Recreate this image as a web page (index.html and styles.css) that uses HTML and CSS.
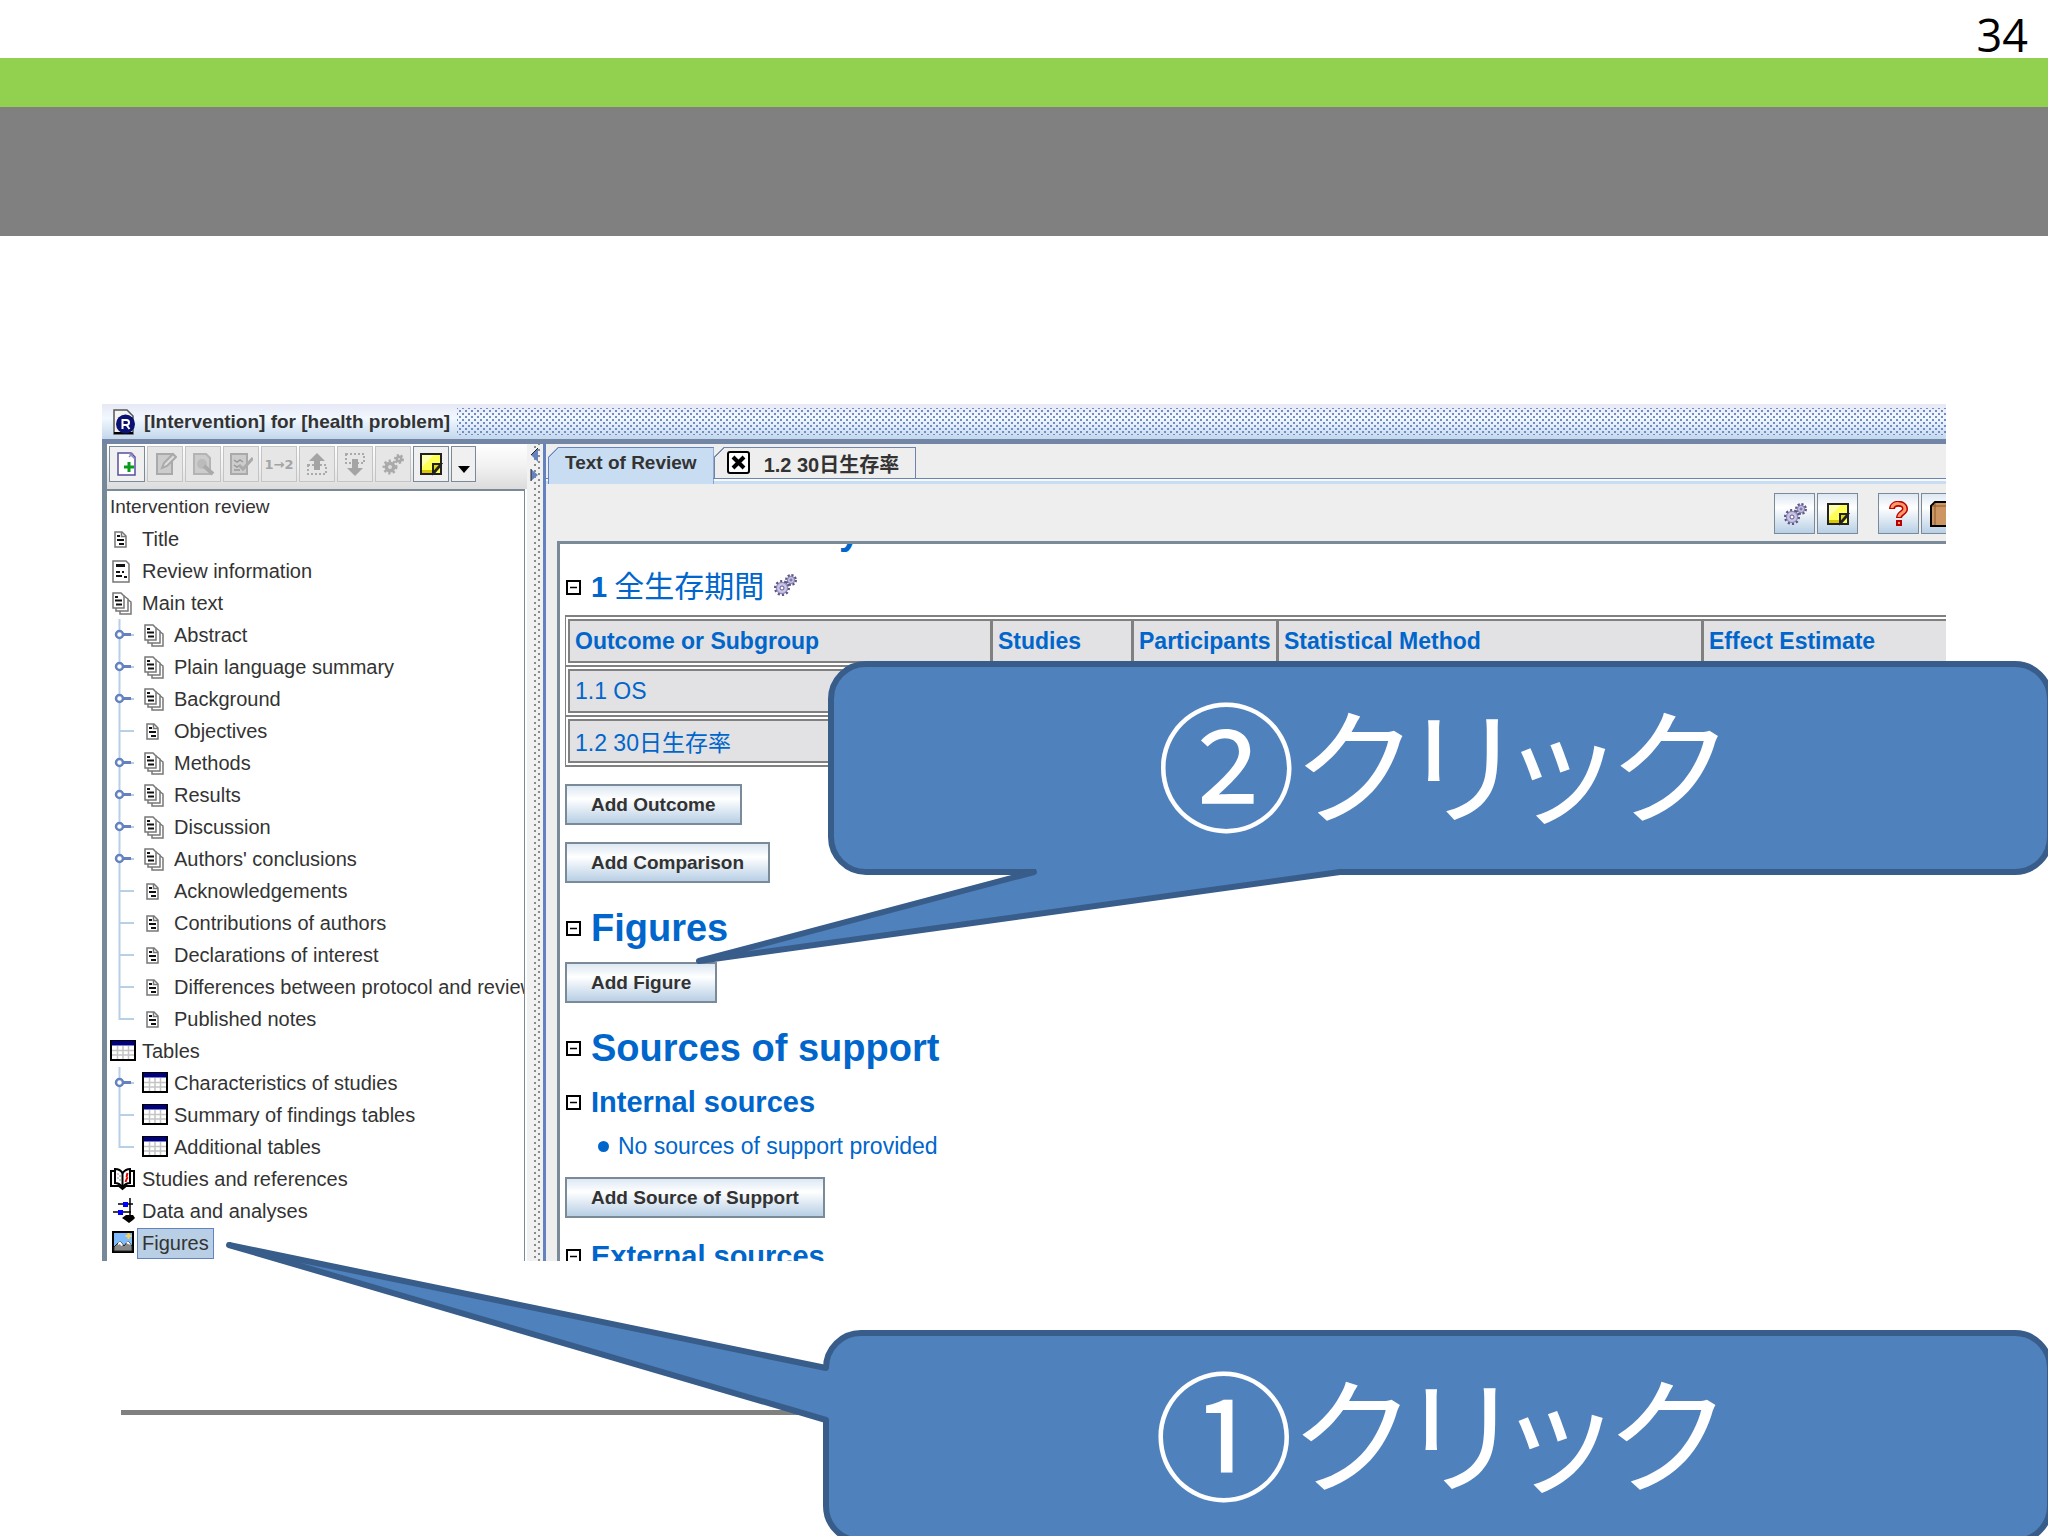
FILE: index.html
```
<!DOCTYPE html>
<html lang="ja">
<head>
    <meta charset="UTF-8">
    <meta name="viewport" content="width=device-width, initial-scale=1.0">
    <title>[Intervention] for [health problem]</title>
    <link rel="stylesheet" href="styles.css">
</head>
<body>
    <!-- Shared icons -->
    <svg class="sprite" aria-hidden="true">
        <symbol id="i-doc" viewBox="0 0 26 32">
            <path d="M5 9h7l4 4v11H5z" fill="#fff" stroke="#777" stroke-width="1.5"/>
            <path d="M11.500 9v4.500H16" fill="none" stroke="#777" stroke-width="1.500"/>
            <path d="M7 13h3M7 17h7M9 21h5" stroke="#111" stroke-width="2"/>
        </symbol>
        <symbol id="i-info" viewBox="0 0 26 32">
            <path d="M3 6h13l3 3v18H3z" fill="#fff" stroke="#777" stroke-width="1.5"/>
            <path d="M6 9h9v3H6z" fill="#111"/>
            <path d="M6 17h4m2 0h2M6 21h6m2 1h3" stroke="#111" stroke-width="2"/>
        </symbol>
        <symbol id="i-docs" viewBox="0 0 26 32">
            <path d="M10 12h7l4 3v12H10z" fill="#fff" stroke="#777" stroke-width="1.5"/>
            <path d="M6 9h8l4 3v12H6z" fill="#fff" stroke="#777" stroke-width="1.5"/>
            <path d="M3 6h8l3 3v12H3z" fill="#fff" stroke="#777" stroke-width="1.5"/>
            <path d="M5 10h3M5 13.500h7M6 17.500h6" stroke="#111" stroke-width="2"/>
        </symbol>
        <symbol id="i-table" viewBox="0 0 26 32">
            <path d="M1 6h24v19H1z" fill="#fff" stroke="#000" stroke-width="2"/>
            <path d="M1.500 6h23v4.500h-23z" fill="#000080"/>
            <path d="M7.500 11v13M13 11v13M18.500 11v13M2 15.500h22M2 20h22" stroke="#c4c4c4" stroke-width="1.500"/>
        </symbol>
        <symbol id="i-book" viewBox="0 0 26 32">
            <path d="M5 8H1v15h8l3.500 3 3.500-3h8V8h-4" fill="#fff" stroke="#000" stroke-width="2"/>
            <path d="M12.500 10C10 6 7 6 5 6v14c3 0 5 1 7.500 4 2.500-3 4.500-4 7.500-4V6c-3 0-5 1-7.500 4z" fill="#fff" stroke="#000" stroke-width="2"/>
            <path d="M12.500 10v14" stroke="#000" stroke-width="2"/>
            <path d="M8 10v8M10 12v8" stroke="#999" stroke-dasharray="2 2"/>
            <path d="M17.500 10l-1 4m1 0l-2 5" fill="none" stroke="#e00" stroke-width="2"/>
        </symbol>
        <symbol id="i-data" viewBox="0 0 26 32">
            <path d="M20 3v20M8 9h15M3 17h18" stroke="#000" stroke-width="1.5"/>
            <path d="M13 7h5v5h-5zM8 15h5v5H8z" fill="#00f"/>
            <path d="M12 23l4-3h7l2 3-2 2-4 3-4-3z" fill="#000"/>
        </symbol>
        <symbol id="i-figure" viewBox="0 0 26 32">
            <path d="M3 5h20v20H3z" fill="#7fbcff" stroke="#000" stroke-width="2"/>
            <path d="M4 20l6-6 4 5 4-5 4 5v5H4z" fill="#888" stroke="#222"/>
            <path d="M8 16l2-2 3 4-2 1-1-2-2 1zM16 16l2-2 3 4-3-1z" fill="#fff"/>
            <path d="M18.500 6v6M15.500 9h6" stroke="#ffd34d" stroke-width="2"/>
        </symbol>
        <symbol id="g-knob" viewBox="0 0 32 32">
            <path d="M9.500 0v32M9.500 16H24" stroke="#b8cfe5" stroke-width="2"/>
            <path d="M13 15.500h8" stroke="#6382bf" stroke-width="3"/>
            <circle cx="9.500" cy="15.500" r="3.500" fill="#fff" stroke="#6382bf" stroke-width="2.500"/>
        </symbol>
        <symbol id="g-line" viewBox="0 0 32 32">
            <path d="M9.500 0v32M9.500 16H24" fill="none" stroke="#b8cfe5" stroke-width="2"/>
        </symbol>
        <symbol id="g-last" viewBox="0 0 32 32">
            <path d="M9.500 0v16H24" fill="none" stroke="#b8cfe5" stroke-width="2"/>
        </symbol>
        <symbol id="i-gears" viewBox="0 0 24 24">
            <g fill="#c9c4e8" stroke="#5b5784">
                <circle cx="9" cy="15" r="6.500" stroke-width="3" stroke-dasharray="2 2"/>
                <circle cx="9" cy="15" r="5.500" stroke="#8884ae"/>
                <circle cx="18" cy="7" r="4.500" stroke-width="3" stroke-dasharray="2 1.500"/>
                <circle cx="18" cy="7" r="3.500" stroke="#8884ae"/>
            </g>
            <circle cx="9" cy="15" r="2" fill="#fff" stroke="#5b5784"/>
            <circle cx="18" cy="7" r="1" fill="#fff" stroke="#5b5784"/>
        </symbol>
        <symbol id="i-gears-off" viewBox="0 0 24 24">
            <g fill="#aaa" stroke="#aaa">
                <circle cx="9" cy="15" r="5.500" stroke-width="4" stroke-dasharray="2 2"/>
                <circle cx="18" cy="7" r="3.500" stroke-width="3" stroke-dasharray="2 1.500"/>
            </g>
            <circle cx="9" cy="15" r="2" fill="#ddd"/>
            <circle cx="18" cy="7" r="1" fill="#ddd"/>
        </symbol>
        <symbol id="i-note" viewBox="0 0 24 24">
            <path d="M2 2h20v20H2z" fill="#ff5" stroke="#222" stroke-width="2"/>
            <path d="M3 3h12L3 15z" fill="#ffffb0"/>
            <path d="M3 18h10v3H3z" fill="#dcc800"/>
            <path d="M14 21v-9h8zM15 21l7-8" fill="#e8d800" stroke="#222" stroke-width="2"/>
        </symbol>
        <symbol id="i-minus" viewBox="0 0 15 15">
            <path d="M1 1h13v13H1z" fill="#fff" stroke="#000" stroke-width="2"/>
            <path d="M4 7.500h7" stroke="#000" stroke-width="1.500"/>
        </symbol>
    </svg>

    <div class="slide">
        <div class="page-number">34</div>
        <div class="band band-green"></div>
        <div class="band band-gray"></div>

        <div class="app">
            <div class="titlebar">
                <svg class="logo" viewBox="0 0 22 26">
                    <path d="M1 1h13l6 6v18H1z" fill="#f4f4f4" stroke="#555" stroke-width="1.500"/>
                    <path d="M1 24h19" stroke="#000" stroke-width="2"/>
                    <circle cx="12.500" cy="15" r="9.500" fill="#0a1172"/>
                    <path d="M9.500 20v-9h4a2.500 2.500 0 0 1 0 5h-4m4 0l3 4" fill="none" stroke="#fff" stroke-width="2"/>
                </svg>
                <span>[Intervention] for [health problem]</span>
                <div class="grip"></div>
            </div>

            <div class="body">
                <div class="side">
                    <div class="toolbar">
                        <button class="tool" aria-label="New"><svg viewBox="0 0 24 24"><path d="M3 1h13l4 4v18H3z" fill="#fff" stroke="#554fa0" stroke-width="1.500"/><path d="M14 1l6 6M14 5l4-4" stroke="#8f8ac0" stroke-width="1.500"/><path d="M14 10v10M9 15h10" stroke="#0a9a20" stroke-width="3"/></svg></button>
                        <button class="tool" aria-label="Edit" disabled><svg viewBox="0 0 24 24"><path d="M4 2h15v20H4z" fill="#ccc" stroke="#aaa" stroke-width="2"/><path d="M9 16l2-5 9-9 3 3-9 9z" fill="#ddd" stroke="#aaa" stroke-width="2"/></svg></button>
                        <button class="tool" aria-label="View" disabled><svg viewBox="0 0 24 24"><path d="M3 2h12l4 4v16H3z" fill="#ccc" stroke="#b4b4b4" stroke-width="2"/><circle cx="11" cy="12" r="5" fill="#bbb"/><path d="M13 14l9 8" stroke="#aaa" stroke-width="4"/></svg></button>
                        <button class="tool" aria-label="Check" disabled><svg viewBox="0 0 24 24"><path d="M2 2h16v20H2z" fill="#ccc" stroke="#aaa" stroke-width="2"/><path d="M5 8l3 2 3-2 3 2M5 13l3 2 3-2M5 18h6" fill="none" stroke="#999" stroke-width="1.500"/><path d="M10 13l4 4 10-11" fill="none" stroke="#aaa" stroke-width="3"/></svg></button>
                        <button class="tool tool-text" disabled>1→2</button>
                        <button class="tool" aria-label="Move up" disabled><svg viewBox="0 0 24 24"><path d="M3 13h18v9H3z" fill="none" stroke="#aaa" stroke-width="2" stroke-dasharray="2 2"/><path d="M12 1l8 8h-5v9H9V9H4z" fill="#a4a4a4"/></svg></button>
                        <button class="tool" aria-label="Move down" disabled><svg viewBox="0 0 24 24"><path d="M3 2h18v9H3z" fill="none" stroke="#aaa" stroke-width="2" stroke-dasharray="2 2"/><path d="M12 24l8-8h-5V7H9v9H4z" fill="#a4a4a4"/></svg></button>
                        <button class="tool" aria-label="Properties" disabled><svg><use href="#i-gears-off"/></svg></button>
                        <button class="tool" aria-label="Note"><svg><use href="#i-note"/></svg></button>
                        <button class="tool tool-drop" aria-label="More"><svg viewBox="0 0 12 24"><path d="M0 14h12l-6 7z" fill="#000"/></svg></button>
                    </div>
                    <ul class="tree">
                        <li class="root">Intervention review</li>
                        <li><svg class="icon"><use href="#i-doc"/></svg><span>Title</span></li>
                        <li><svg class="icon"><use href="#i-info"/></svg><span>Review information</span></li>
                        <li><svg class="icon"><use href="#i-docs"/></svg><span>Main text</span></li>
                        <li><svg class="guide"><use href="#g-knob"/></svg><svg class="icon"><use href="#i-docs"/></svg><span>Abstract</span></li>
                        <li><svg class="guide"><use href="#g-knob"/></svg><svg class="icon"><use href="#i-docs"/></svg><span>Plain language summary</span></li>
                        <li><svg class="guide"><use href="#g-knob"/></svg><svg class="icon"><use href="#i-docs"/></svg><span>Background</span></li>
                        <li><svg class="guide"><use href="#g-line"/></svg><svg class="icon"><use href="#i-doc"/></svg><span>Objectives</span></li>
                        <li><svg class="guide"><use href="#g-knob"/></svg><svg class="icon"><use href="#i-docs"/></svg><span>Methods</span></li>
                        <li><svg class="guide"><use href="#g-knob"/></svg><svg class="icon"><use href="#i-docs"/></svg><span>Results</span></li>
                        <li><svg class="guide"><use href="#g-knob"/></svg><svg class="icon"><use href="#i-docs"/></svg><span>Discussion</span></li>
                        <li><svg class="guide"><use href="#g-knob"/></svg><svg class="icon"><use href="#i-docs"/></svg><span>Authors' conclusions</span></li>
                        <li><svg class="guide"><use href="#g-line"/></svg><svg class="icon"><use href="#i-doc"/></svg><span>Acknowledgements</span></li>
                        <li><svg class="guide"><use href="#g-line"/></svg><svg class="icon"><use href="#i-doc"/></svg><span>Contributions of authors</span></li>
                        <li><svg class="guide"><use href="#g-line"/></svg><svg class="icon"><use href="#i-doc"/></svg><span>Declarations of interest</span></li>
                        <li><svg class="guide"><use href="#g-line"/></svg><svg class="icon"><use href="#i-doc"/></svg><span>Differences between protocol and review</span></li>
                        <li><svg class="guide"><use href="#g-last"/></svg><svg class="icon"><use href="#i-doc"/></svg><span>Published notes</span></li>
                        <li><svg class="icon"><use href="#i-table"/></svg><span>Tables</span></li>
                        <li><svg class="guide"><use href="#g-knob"/></svg><svg class="icon"><use href="#i-table"/></svg><span>Characteristics of studies</span></li>
                        <li><svg class="guide"><use href="#g-line"/></svg><svg class="icon"><use href="#i-table"/></svg><span>Summary of findings tables</span></li>
                        <li><svg class="guide"><use href="#g-last"/></svg><svg class="icon"><use href="#i-table"/></svg><span>Additional tables</span></li>
                        <li><svg class="icon"><use href="#i-book"/></svg><span>Studies and references</span></li>
                        <li><svg class="icon"><use href="#i-data"/></svg><span>Data and analyses</span></li>
                        <li><svg class="icon"><use href="#i-figure"/></svg><span class="selected">Figures</span></li>
                    </ul>
                </div>

                <div class="splitter">
                    <svg viewBox="0 0 16 40"><path d="M11 4v14l-7-7z" fill="#6382bf"/><path d="M11 4l-7 7" stroke="#222"/><path d="M4 25v12l7-6z" fill="#6382bf"/><path d="M4 25v12" stroke="#222"/></svg>
                </div>

                <div class="main">
                    <div class="tabs">
                        <button class="tab tab-active">Text of Review</button>
                        <button class="tab">
                            <svg viewBox="0 0 24 24"><rect x="1" y="1" width="21" height="21" rx="2" fill="#fff" stroke="#000" stroke-width="2"/><path d="M6 6l11 11M17 6L6 17" stroke="#000" stroke-width="4"/></svg>
                            1.2 30日生存率
                        </button>
                    </div>
                    <div class="doc-toolbar">
                        <button class="doc-tool" aria-label="Properties"><svg><use href="#i-gears"/></svg></button>
                        <button class="doc-tool" aria-label="Note"><svg><use href="#i-note"/></svg></button>
                        <button class="doc-tool doc-tool-help" aria-label="Help"><svg viewBox="0 0 24 26"><path d="M5 8c0-7 13-7 13 0 0 4-6 4-6 9" fill="none" stroke="#b00" stroke-width="6"/><path d="M9 19h6v6H9z" fill="#b00"/><path d="M5 7c0-6 13-6 13 1 0 4-6 4-6 8" fill="none" stroke="#ff9a6a" stroke-width="3"/><path d="M11 21h2v2h-2z" fill="#ff9a6a"/></svg></button>
                        <button class="doc-tool" aria-label="Handbook"><svg viewBox="0 0 24 26"><path d="M5 1h24v24H1V5z" fill="#cc9562" stroke="#000" stroke-width="2"/><path d="M5 2v22M2 5h22" stroke="#8b5a2b"/></svg></button>
                    </div>

                    <div class="doc">
                        <h1 class="scrolled">Data and analyses</h1>
                        <h2 class="comparison"><svg class="minus"><use href="#i-minus"/></svg>1 <span>全生存期間</span><svg class="gears"><use href="#i-gears"/></svg></h2>
                        <table>
                            <colgroup>
                                <col class="col-wide"><col class="col-studies"><col class="col-part"><col class="col-wide"><col>
                            </colgroup>
                            <thead>
                                <tr><th>Outcome or Subgroup</th><th>Studies</th><th>Participants</th><th>Statistical Method</th><th>Effect Estimate</th></tr>
                            </thead>
                            <tbody>
                                <tr><td>1.1 OS</td><td></td><td></td><td></td><td></td></tr>
                                <tr><td>1.2 30日生存率</td><td></td><td></td><td></td><td></td></tr>
                            </tbody>
                        </table>
                        <button class="add">Add Outcome</button>
                        <button class="add">Add Comparison</button>
                        <h1><svg class="minus"><use href="#i-minus"/></svg>Figures</h1>
                        <button class="add add-tight">Add Figure</button>
                        <h1><svg class="minus"><use href="#i-minus"/></svg>Sources of support</h1>
                        <h2><svg class="minus"><use href="#i-minus"/></svg>Internal sources</h2>
                        <ul class="sources">
                            <li>No sources of support provided</li>
                        </ul>
                        <button class="add">Add Source of Support</button>
                        <h2><svg class="minus"><use href="#i-minus"/></svg>External sources</h2>
                    </div>
                </div>
            </div>
        </div>

        <div class="footer-line"></div>

        <!-- Callouts over the application window -->
        <div class="callout callout-second">
            <svg class="tail" viewBox="690 860 660 110">
                <path d="M1036 868v4L699 961l641-89v-4z" fill="#4f81bd"/>
                <path d="M1034 872L699 961l641-89" fill="none" stroke="#385d8a" stroke-width="6" stroke-linecap="round" stroke-linejoin="round"/>
            </svg>
            <span class="step">②</span><span>クリック</span>
        </div>
        <div class="callout callout-first">
            <svg class="tail" viewBox="220 1235 620 195">
                <path d="M830 1368h-4L229 1245l597 175h4z" fill="#4f81bd"/>
                <path d="M826 1368L229 1245l597 175" fill="none" stroke="#385d8a" stroke-width="6" stroke-linecap="round" stroke-linejoin="round"/>
            </svg>
            <span class="step">①</span><span>クリック</span>
        </div>
    </div>
</body>
</html>
```

FILE: styles.css
```
* {
    box-sizing: border-box;
}

body {
    margin: 0;
    background: #fff;
    font-family: "Liberation Sans", "Noto Sans CJK JP", sans-serif;
    color: #333;
}

button {
    font: bold 19px "Liberation Sans", "Noto Sans CJK JP", sans-serif;
    color: #333;
    margin: 0;
    padding: 0;
}

.sprite {
    display: none;
}

.slide {
    position: relative;
    min-height: 100vh;
    overflow: hidden;
}

.page-number {
    height: 58px;
    padding: 7px 20px 0 0;
    text-align: right;
    font-family: "Open Sans", sans-serif;
    font-size: 45px;
    line-height: 56px;
    color: #000;
}

.band-green {
    height: 49px;
    background: #92d050;
}

.band-gray {
    height: 129px;
    background: #808080;
}

/* Application window */
.app {
    margin: 168px 102px 0;
    overflow: hidden;
}

.titlebar {
    display: flex;
    align-items: center;
    height: 40px;
    padding-left: 11px;
    border-bottom: 5px solid #7385a5;
    background: linear-gradient(#e6e8f5, #f2f8ff 40%, #c3d8ec);
    font-size: 19px;
    font-weight: bold;
}

.logo {
    width: 22px;
    height: 26px;
    margin-right: 9px;
}

.grip {
    flex: 1;
    height: 27px;
    margin-left: 7px;
    background-image: radial-gradient(circle, #6f8cc8 1px, transparent 1px), radial-gradient(circle, #6f8cc8 1px, transparent 1px);
    background-size: 6px 6px;
    background-position: 0 0, 3px 3px;
}

.body {
    display: grid;
    grid-template-columns: 425px 16px 1fr;
}

.side {
    min-width: 0;
    border-left: 5px solid #778899;
}

.toolbar {
    display: flex;
    gap: 2px;
    height: 45px;
    padding: 2px;
    background: linear-gradient(#fff, #f1f1f1 50%, #dcdcdc);
}

.tool {
    display: flex;
    align-items: center;
    justify-content: center;
    width: 36px;
    height: 36px;
    border: 1px solid #7a8a99;
    background: #f0f0f0;
}

.tool:disabled {
    border-color: #c4c4c4;
    background: #e6e6e6;
    color: #a4a4a4;
}

.tool svg {
    width: 24px;
    height: 24px;
}

.tool-text {
    font-family: "DejaVu Sans", sans-serif;
    font-size: 13px;
}

.tool-drop {
    width: 25px;
}

.tool-drop svg {
    width: 12px;
}

.tree {
    margin: 0 2px 0 0;
    padding: 0 0 2px 3px;
    list-style: none;
    overflow: hidden;
    border-top: 2px solid #7a8a99;
    border-right: 1px solid #7a8a99;
    background: #fff;
    font-size: 20px;
}

.tree li {
    display: flex;
    align-items: center;
    height: 32px;
    white-space: nowrap;
}

.tree .root {
    font-size: 19px;
}

.icon {
    flex: none;
    width: 26px;
    height: 32px;
    margin-right: 1px;
}

.guide {
    flex: none;
    width: 32px;
    height: 32px;
}

.tree span {
    padding: 3px 4px;
    border: 1px solid transparent;
}

.tree .selected {
    border-color: #6382bf;
    background: #b8cfe5;
}

.splitter {
    background-color: #f1f1f1;
    background-image: radial-gradient(circle, #8a8a8a 1px, transparent 1px), radial-gradient(circle, #8a8a8a 1px, transparent 1px);
    background-size: 16px 6px;
    background-position: 0 0, 4px 3px;
}

.splitter svg {
    display: block;
    width: 16px;
    height: 40px;
}

/* The document pane is clipped to the height of the tree */
.main {
    contain: size;
    display: flex;
    flex-direction: column;
    min-width: 0;
    overflow: hidden;
    border-left: 3px solid #6382bf;
    background: #eee;
}

.tabs {
    display: flex;
    height: 40px;
    padding: 3px 0 0 2px;
    background: linear-gradient(#eee 34px, #6e84a8 34px 35px, #f4faff 35px 37px, #c8ddf2 37px);
}

.tab {
    display: flex;
    align-items: center;
    gap: 13px;
    height: 31px;
    padding: 0 16px 0 12px;
    border: 1px solid #6e84a8;
    border-bottom: none;
    background: linear-gradient(135deg, transparent 7px, #6e84a8 7px 8px, #eee 8px) border-box;
    clip-path: polygon(10px 0, 100% 0, 100% 100%, 0 100%, 0 10px);
    font-size: 20px;
}

.tab-active {
    height: 37px;
    padding: 0 16px 6px;
    border-color: #6382bf;
    background: linear-gradient(135deg, transparent 7px, #6382bf 7px 8px, #c8ddf2 8px) border-box;
    font-size: 19px;
}

.tab svg {
    width: 24px;
    height: 24px;
}

.doc-toolbar {
    display: flex;
    justify-content: flex-end;
    gap: 2px;
    height: 57px;
    margin-right: -16px;
    padding-top: 9px;
}

.doc-tool {
    display: flex;
    flex: none;
    align-items: center;
    justify-content: center;
    width: 41px;
    height: 41px;
    border: 1px solid #7a8a99;
    background: linear-gradient(#dde8f3, #fff 35%, #b8cfe5);
}

.doc-tool-help {
    margin-left: 18px;
}

.doc-tool svg {
    width: 24px;
    height: 26px;
}

/* Review document */
.doc {
    flex: 1;
    min-height: 0;
    margin-left: 11px;
    padding-left: 5px;
    overflow: hidden;
    border-top: 3px solid #7a8a99;
    border-left: 3px solid #7a8a99;
    background: #fff;
    color: #0066cc;
    font-size: 23px;
}

.doc h1,
.doc h2 {
    display: flex;
    align-items: center;
    margin: 23px 0 0;
    font-size: 38px;
    line-height: 44px;
}

.doc h2 {
    margin-top: 21px;
    font-size: 29px;
    line-height: 34px;
}

.doc h1 + h2 {
    margin-top: 15px;
}

.doc .scrolled {
    margin: -35px 0 0;
    padding-left: 27px;
}

.doc .comparison {
    margin: 14px 0 8px;
    line-height: 40px;
}

.comparison span {
    margin-left: 7px;
    font-size: 30px;
    font-weight: normal;
}

.gears {
    width: 24px;
    height: 24px;
    margin: 0 0 4px 9px;
}

.minus {
    flex: none;
    width: 15px;
    height: 15px;
    margin: 1px 10px 0 1px;
}

table {
    table-layout: fixed;
    width: calc(100% + 80px);
    border-spacing: 0;
    border-bottom: 2px solid #808080;
}

.col-wide {
    width: 425px;
}

.col-studies {
    width: 141px;
}

.col-part {
    width: 145px;
}

th,
td {
    height: 50px;
    padding: 0 0 0 8px;
    border-top: 2px solid #808080;
    background: #e2e1e3;
    box-shadow: inset 0 2px #fff, inset 0 -2px #fff, inset 3px 4px #808080, inset 0 -4px #808080;
    text-align: left;
    white-space: nowrap;
}

th:first-child,
td:first-child {
    border-left: 1px solid #808080;
    padding-left: 9px;
    box-shadow: inset 2px 2px #fff, inset 0 -2px #fff, inset 4px 4px #808080, inset 0 -4px #808080;
}

.add {
    display: block;
    height: 41px;
    margin-top: 17px;
    padding: 0 24px;
    border: 2px solid #7a8a99;
    background: linear-gradient(#dde8f3, #fff 35%, #b8cfe5);
}

.add-tight {
    margin-top: 12px;
}

.sources {
    margin: 13px 0 0;
    padding: 0 0 0 33px;
    list-style: none;
    line-height: 28px;
}

.sources li {
    display: flex;
    align-items: center;
    gap: 9px;
}

.sources li::before {
    content: "";
    width: 11px;
    height: 11px;
    border-radius: 50%;
    background: #0066cc;
}

.footer-line {
    height: 5px;
    margin: 149px 102px 0 121px;
    background: #808080;
}

/* Callouts */
.callout {
    position: absolute;
    right: -5px;
    display: flex;
    align-items: center;
    justify-content: center;
    height: 214px;
    padding-bottom: 16px;
    border: 6px solid #385d8a;
    border-radius: 38px;
    background: #4f81bd;
    color: #fff;
    font-family: "Noto Sans CJK JP", sans-serif;
    font-size: 126px;
    line-height: 200px;
    font-feature-settings: "palt";
    white-space: nowrap;
}

.step {
    font-size: 140px;
}

.callout-second {
    left: 828px;
    top: 661px;
}

.callout-first {
    left: 823px;
    top: 1330px;
}

.tail {
    position: absolute;
}

.callout-second .tail {
    left: -144px;
    top: 193px;
    width: 660px;
    height: 110px;
}

.callout-first .tail {
    left: -609px;
    top: -101px;
    width: 620px;
    height: 195px;
}
```
